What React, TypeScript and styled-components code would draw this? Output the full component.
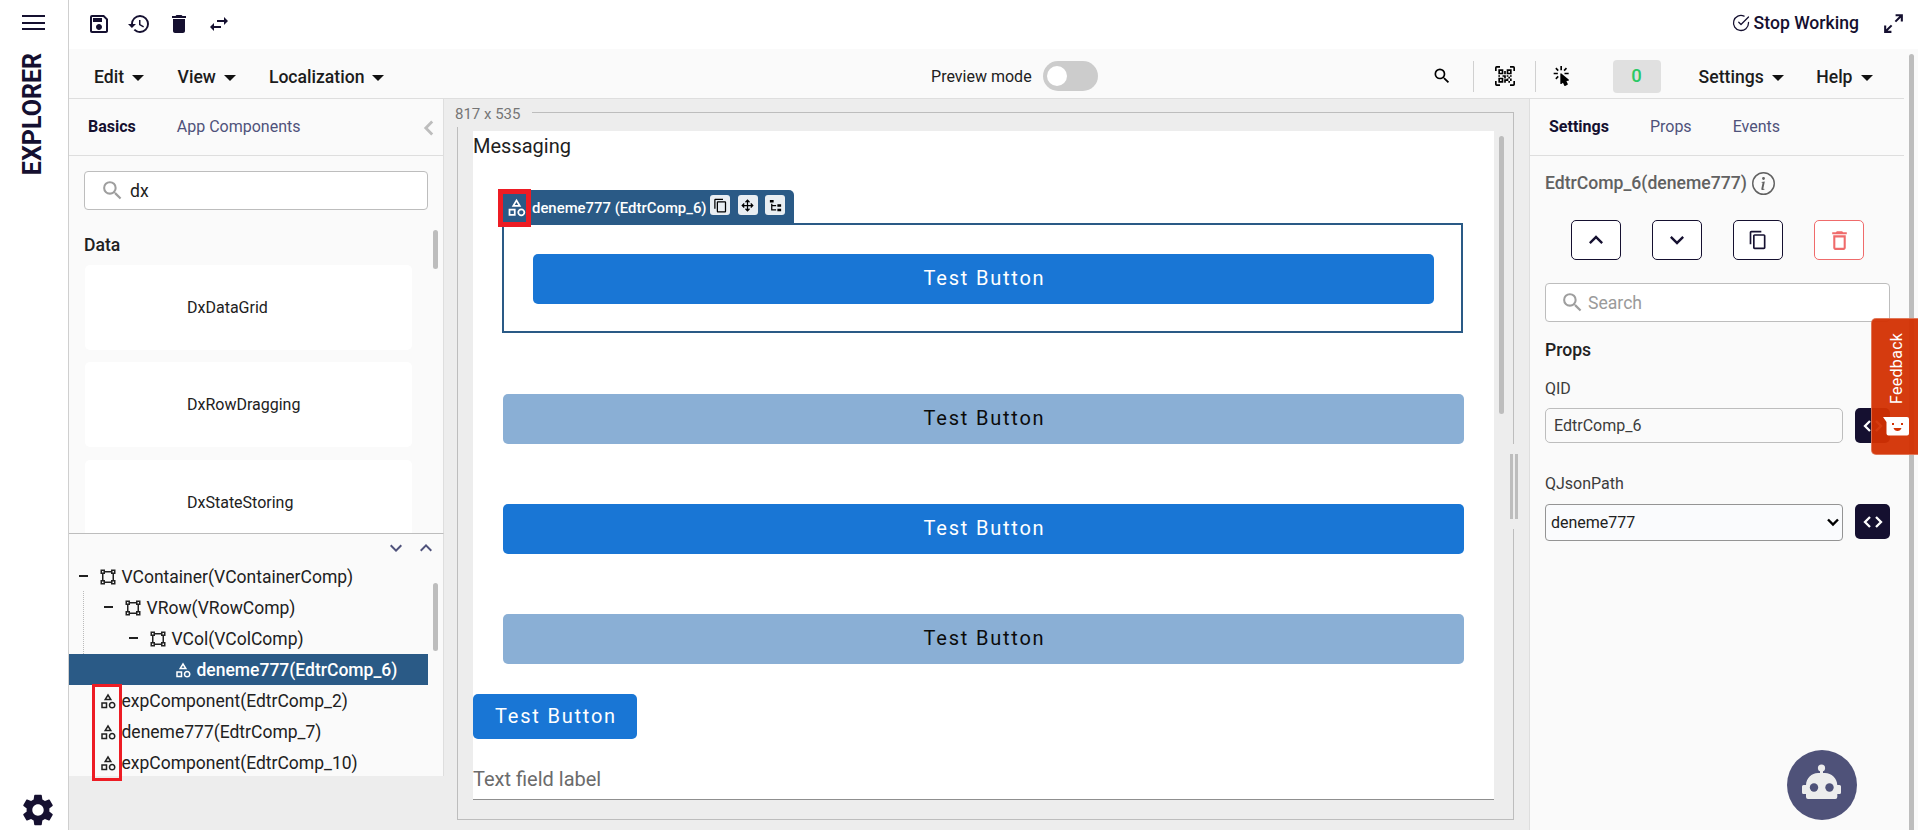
import React from 'react';
import styled, { createGlobalStyle, css } from 'styled-components';
import {
  MdContentCopy,
  MdDelete,
  MdDeleteOutline,
  MdHistory,
  MdOutlineCategory,
  MdOutlineSave,
  MdSearch,
  MdSettings,
  MdSwapHoriz,
} from 'react-icons/md';
import { BsInfoCircle } from 'react-icons/bs';
import { FiCheckCircle } from 'react-icons/fi';

const c = {
  ink: '#151030',
  text: '#212121',
  muted: '#4f527b',
  line: '#dedede',
  grey: '#bdbdbd',
  panel: '#fafafa',
  canvas: '#ededed',
  navy: '#2a5a86',
  blue: '#1976d5',
  paleBlue: '#8aafd5',
  mark: '#ed1c24',
};

const GlobalStyle = createGlobalStyle`
  * { box-sizing: border-box; }
  body {
    margin: 0;
    overflow: hidden;
    font-family: Roboto, "Liberation Sans", sans-serif;
    font-size: 16px;
    color: ${c.text};
    background: #fff;
  }
  svg { display: block; flex: none; }
`;

/* ---------- icons ---------- */

const paths = {
  vectorSquare:
    'M2,2H8V4H16V2H22V8H20V16H22V22H16V20H8V22H2V16H4V8H2V2M16,8V6H8V8H6V16H8V18H16V16H18V8H16M4,4V6H6V4H4M18,4V6H20V4H18M4,18V20H6V18H4M18,18V20H20V18H18Z',
  fileTree:
    'M3,3H9V7H3V3M15,10H21V14H15V10M15,17H21V21H15V17M13,13H7V18H13V20H7L5,20V9H7V11H13V13Z',
  arrowAll:
    'M13,11H18L16.5,9.5L17.92,8.08L21.84,12L17.92,15.92L16.5,14.5L18,13H13V18L14.5,16.5L15.92,17.92L12,21.84L8.08,17.92L9.5,16.5L11,18V13H6L7.5,14.5L6.08,15.92L2.16,12L6.08,8.08L7.5,9.5L6,11H11V6L9.5,7.5L8.08,6.08L12,2.16L15.92,6.08L14.5,7.5L13,6V11Z',
  expand:
    'M10,21V19H6.41L10.91,14.5L9.5,13.09L5,17.59V14H3V21H10M14.5,10.91L19,6.41V10H21V3H14V5H17.59L13.09,9.5L14.5,10.91Z',
  qr:
    'M4,4H10V10H4V4M20,4V10H14V4H20M14,15H16V13H14V11H16V13H18V11H20V13H18V15H20V18H18V20H16V18H13V20H11V16H14V15M16,15V18H18V15H16M4,20V14H10V20H4M6,6V8H8V6H6M16,6V8H18V6H16M6,16V18H8V16H6M4,11H6V13H4V11M9,11H13V15H11V13H9V11M11,6H13V10H11V6M2,2V6H0V2A2,2 0 0,1 2,0H6V2H2M22,0A2,2 0 0,1 24,2V6H22V2H18V0H22M2,18V22H6V24H2A2,2 0 0,1 0,22V18H2M22,22V18H24V22A2,2 0 0,1 22,24H18V22H22Z',
  click:
    'M10.76,8.69A0.76,0.76 0 0,0 10,9.45V20.9C10,21.32 10.34,21.66 10.76,21.66C10.95,21.66 11.11,21.6 11.24,21.5L13.15,19.95L14.81,23.57C14.94,23.84 15.21,24 15.5,24C15.61,24 15.72,24 15.83,23.92L18.59,22.64C18.97,22.46 19.15,22 18.95,21.63L17.28,18L19.69,17.55C19.85,17.5 20,17.43 20.12,17.29C20.39,16.97 20.35,16.5 20,16.21L11.26,8.86L11.25,8.87C11.12,8.76 10.95,8.69 10.76,8.69M15,10V8H20V10H15M13.83,4.76L16.66,1.93L18.07,3.34L15.24,6.17L13.83,4.76M10,0H12V5H10V0M3.93,14.66L6.76,11.83L8.17,13.24L5.34,16.07L3.93,14.66M3.93,3.34L5.34,1.93L8.17,4.76L6.76,6.17L3.93,3.34M7,10H2V8H7V10',
  up: 'M7.41,15.41L12,10.83L16.59,15.41L18,14L12,8L6,14L7.41,15.41Z',
  down: 'M7.41,8.58L12,13.17L16.59,8.58L18,10L12,16L6,10L7.41,8.58Z',
};

function Glyph({ name, size }: { name: keyof typeof paths; size: number }) {
  return (
    <svg width={size} height={size} viewBox="0 0 24 24" fill="currentColor" fillRule="evenodd">
      <path d={paths[name]} />
    </svg>
  );
}

function CodeIcon() {
  return (
    <svg width="22" height="14" viewBox="0 0 22 14" fill="none" stroke="#fff" strokeWidth="2.3">
      <path d="M8 2 3 7l5 5M14 2l5 5-5 5" />
    </svg>
  );
}

/* ---------- shell ---------- */

const Shell = styled.div`
  position: relative;
  display: flex;
  width: 1918px;
  height: 830px;
  overflow: hidden;
  white-space: nowrap;
`;

const Rail = styled.aside`
  flex: none;
  display: flex;
  flex-direction: column;
  width: 69px;
  padding: 15px 0 1px;
  border-right: 1px solid #cfcfcf;
  color: ${c.ink};
`;

const Burger = styled.div`
  width: 23px;
  height: 15px;
  margin-left: 22px;
  border: solid ${c.ink};
  border-width: 2px 0;
  display: flex;
  align-items: center;
  &::before {
    content: '';
    width: 100%;
    height: 2px;
    background: ${c.ink};
  }
`;

const RailTitle = styled.div`
  writing-mode: vertical-rl;
  transform: rotate(180deg);
  width: 30px;
  margin: 23px 0 0 18px;
  line-height: 30px;
  font-size: 25px;
  font-weight: 700;
`;

const RailFoot = styled.div`
  margin: auto 0 0 19px;
`;

const Body = styled.div`
  flex: 1;
  display: flex;
  flex-direction: column;
  min-width: 0;
`;

const TopBar = styled.header`
  flex: none;
  display: flex;
  align-items: center;
  height: 49px;
  padding: 0 12px 2px 18px;
  color: ${c.ink};
`;

const TopIcons = styled.div`
  display: flex;
  gap: 16px;
`;

const StopWorking = styled.div`
  display: flex;
  align-items: center;
  gap: 4px;
  margin: 0 22px 1px auto;
  font-size: 17.6px;
  font-weight: 500;
`;

const Work = styled.div`
  flex: 1;
  display: flex;
  min-height: 0;
  background: ${c.panel};
`;

const Editor = styled.div`
  flex: none;
  display: flex;
  flex-direction: column;
  width: 1835px;
`;

const Gutter = styled.div`
  padding: 5px 0 0 5px;
`;

const Thumb = styled.div<{ $h: number; $top?: number }>`
  width: 5px;
  height: ${(p) => p.$h}px;
  margin-top: ${(p) => p.$top ?? 0}px;
  border-radius: 3px;
  background: ${c.grey};
`;

/* ---------- menu bar ---------- */

const MenuBar = styled.nav`
  flex: none;
  display: flex;
  align-items: center;
  height: 50px;
  padding: 6px 31.5px 0 25px;
  border-bottom: 1px solid ${c.line};
`;

const MenuItem = styled.div<{ $before?: number }>`
  display: flex;
  align-items: center;
  gap: 8px;
  margin-left: ${(p) => p.$before ?? 0}px;
  font-size: 17.6px;
  font-weight: 500;
  color: #1c1c1c;
  &::after {
    content: '';
    margin-top: 2px;
    border: solid transparent;
    border-width: 6px 6px 0;
    border-top-color: #111;
  }
`;

const Preview = styled.div`
  display: flex;
  align-items: center;
  gap: 11px;
  margin-left: auto;
`;

const Switch = styled.div`
  width: 55px;
  height: 30px;
  padding: 5px 4px;
  margin-bottom: 2px;
  border-radius: 15px;
  background: #ccc;
  &::before {
    content: '';
    display: block;
    width: 20px;
    height: 20px;
    border-radius: 50%;
    background: #fff;
  }
`;

const Tools = styled.div`
  display: flex;
  align-items: center;
  margin-left: 334px;
  color: #000;
`;

const ToolCell = styled.div<{ $w: number; $pad: number; $ruled?: boolean }>`
  display: flex;
  align-items: center;
  width: ${(p) => p.$w}px;
  height: 31px;
  margin-bottom: 1px;
  padding-left: ${(p) => p.$pad}px;
  ${(p) => p.$ruled && css`border-right: 1px solid #d0d0d0;`}
`;

const Count = styled.div`
  width: 48px;
  height: 33px;
  line-height: 33px;
  border-radius: 4px;
  background: #e0e0e0;
  color: #2bc966;
  font-size: 18.5px;
  font-weight: 500;
  text-align: center;
`;

/* ---------- left panel ---------- */

const Columns = styled.div`
  flex: 1;
  display: flex;
  min-height: 0;
`;

const LeftColumn = styled.div`
  flex: none;
  width: 375px;
  background: ${c.canvas};
`;

const Library = styled.section`
  display: flex;
  flex-direction: column;
  height: 435px;
  background: ${c.panel};
  border-right: 1px solid ${c.line};
  border-bottom: 1px solid ${c.grey};
  overflow: hidden;
`;

const Tabs = styled.div<{ $gap: number }>`
  flex: none;
  display: flex;
  align-items: center;
  gap: ${(p) => p.$gap}px;
  height: 57px;
  padding: 0 9px 1px 19px;
  border-bottom: 1px solid ${c.line};
`;

const Tab = styled.span<{ $active?: boolean }>`
  color: ${(p) => (p.$active ? c.ink : c.muted)};
  font-weight: ${(p) => (p.$active ? 700 : 400)};
`;

const Collapse = styled.span`
  margin: 2px 0 0 auto;
`;

const SearchBox = styled.div<{ $placeholder?: boolean }>`
  flex: none;
  display: flex;
  align-items: center;
  gap: ${(p) => (p.$placeholder ? 3 : 5)}px;
  height: 39px;
  padding-left: ${(p) => (p.$placeholder ? 14 : 15)}px;
  border: 1px solid ${c.grey};
  border-radius: 4px;
  background: #fff;
  font-size: 17.6px;
  color: ${(p) => (p.$placeholder ? '#9a9a9a' : c.text)};
  svg { color: #9e9e9e; margin-top: -1px; }
`;

const LibrarySearch = styled.div`
  flex: none;
  padding: 15px 15px 0;
`;

const LibraryBody = styled.div`
  flex: 1;
  display: flex;
  justify-content: space-between;
  min-height: 0;
  padding: 20px 5px 0 15px;
`;

const CardList = styled.div`
  display: flex;
  flex-direction: column;
  gap: 12.5px;
  width: 328px;
  padding-left: 1px;
`;

const GroupTitle = styled.h3`
  margin: 0 0 -3px -1px;
  line-height: 25px;
  height: 25px;
  padding-top: 3px;
  font-size: 17.6px;
  font-weight: 500;
`;

const Card = styled.div`
  flex: none;
  height: 85px;
  padding: 0 0 0 102px;
  line-height: 85px;
  border-radius: 5px;
  background: #fff;
`;

const TreePanel = styled.section`
  position: relative;
  height: 242px;
  background: ${c.panel};
  border-right: 1px solid ${c.line};
`;

const TreeHead = styled.div`
  display: flex;
  justify-content: flex-end;
  gap: 6px;
  height: 27px;
  padding: 2px 5px 0 0;
  color: ${c.muted};
`;

const TreeBody = styled.div`
  display: flex;
  justify-content: space-between;
  height: 215px;
  padding-right: 5px;
  overflow: hidden;
`;

const TreeList = styled.div`
  width: 359px;
`;

const TreeRow = styled.div<{ $level: number; $active?: boolean }>`
  display: flex;
  align-items: center;
  height: 31px;
  padding-left: ${(p) => 10 + p.$level * 25}px;
  font-size: 17.5px;
  ${(p) =>
    p.$active &&
    css`
      background: ${c.navy};
      color: #fff;
      font-weight: 500;
    `}
`;

const Toggle = styled.span<{ $shown?: boolean }>`
  width: 9px;
  height: 2px;
  margin: 0 11px 2px 0;
  background: ${(p) => (p.$shown ? c.text : 'transparent')};
`;

const TreeLabel = styled.span`
  margin-left: 4.5px;
`;

const Guide = styled.div`
  position: absolute;
  left: 14px;
  top: 57px;
  height: 63px;
  border-left: 1px dotted #bbb;
`;

const TreeMark = styled.div`
  position: absolute;
  left: 23px;
  top: 150px;
  width: 30px;
  height: 97px;
  border: 3px solid ${c.mark};
`;

/* ---------- canvas ---------- */

const Canvas = styled.main`
  position: relative;
  flex: none;
  width: 1085px;
  padding: 13px 15px 10px 13px;
  background: ${c.canvas};
`;

const Frame = styled.div`
  display: flex;
  height: 708px;
  padding: 18px 9px 0 15px;
  border: 1px solid ${c.grey};
`;

const SizeLabel = styled.div`
  position: absolute;
  left: 5px;
  top: 5px;
  width: 83px;
  height: 23px;
  padding-left: 6px;
  line-height: 20px;
  font-size: 15px;
  color: #757575;
  background: ${c.canvas};
`;

const Resizer = styled.div`
  position: absolute;
  left: 1066px;
  top: 345px;
  display: flex;
  gap: 2px;
  height: 85px;
  padding: 10px 0;
  background: ${c.canvas};
  &::before,
  &::after {
    content: '';
    width: 3px;
    background: ${c.grey};
  }
`;

const Page = styled.div`
  flex: none;
  display: flex;
  flex-direction: column;
  width: 1021px;
  height: 669px;
  margin-right: 5px;
  border-bottom: 1px solid #8f8f8f;
  background: #fff;
  font-size: 20px;
`;

const Heading = styled.div`
  height: 92px;
  line-height: 31px;
`;

const Selected = styled.div`
  position: relative;
  width: 961px;
  height: 110px;
  margin: 0 0 31px 29px;
  padding: 29px 27px 0 29px;
  border: 2px solid ${c.navy};
`;

const TestButton = styled.div<{ $kind: 'solid' | 'pale' | 'small' }>`
  flex: none;
  height: 50px;
  padding-left: 2px;
  line-height: 49px;
  border-radius: 5px;
  text-align: center;
  letter-spacing: 0.0892857em;
  color: ${(p) => (p.$kind === 'pale' ? '#0b0b0b' : '#fff')};
  background: ${(p) => (p.$kind === 'pale' ? c.paleBlue : c.blue)};
  ${(p) =>
    p.$kind === 'small' &&
    css`
      width: 164px;
      height: 45px;
      line-height: 45px;
      margin-top: 30px;
    `}
`;

const Stack = styled.div`
  display: flex;
  flex-direction: column;
  gap: 60px;
  margin: 30px 30px 0;
`;

const FieldLabel = styled.div`
  margin-top: 25px;
  line-height: 30px;
  color: #6b6b6b;
`;

const Toolbar = styled.div`
  position: absolute;
  left: -2px;
  top: -35px;
  display: flex;
  align-items: center;
  width: 292px;
  height: 35px;
  padding: 0 0 0 4px;
  border-radius: 0 5px 0 0;
  background: ${c.navy};
  color: #fff;
  font-size: 14.9px;
  font-weight: 500;
`;

const ToolbarLabel = styled.span`
  width: 177px;
  margin-left: 5px;
  padding-top: 1px;
`;

const ChipRow = styled.div`
  display: flex;
  gap: 7.5px;
  margin: 0 0 5px 1px;
`;

const Chip = styled.div`
  display: flex;
  align-items: center;
  justify-content: center;
  width: 20px;
  height: 20px;
  border-radius: 3px;
  background: #e9eef2;
  color: #000;
`;

const ToolbarMark = styled.div`
  position: absolute;
  left: -6px;
  top: -36px;
  width: 33px;
  height: 38px;
  border: 5px solid ${c.mark};
`;

/* ---------- right panel ---------- */

const Inspector = styled.section`
  flex: 1;
  border-left: 1px solid ${c.line};
`;

const InspectorBody = styled.div`
  display: flex;
  flex-direction: column;
  padding: 15px 14px 0 15px;
`;

const Title = styled.div`
  display: flex;
  align-items: center;
  gap: 5px;
  height: 24px;
  margin-bottom: -1px;
  font-size: 17.6px;
  font-weight: 500;
  color: #616161;
`;

const Actions = styled.div`
  display: flex;
  gap: 31px;
  margin: 26px 0 23px 26px;
`;

const Action = styled.div<{ $danger?: boolean }>`
  display: flex;
  align-items: center;
  justify-content: center;
  width: 50px;
  height: 40px;
  border: 1px solid ${(p) => (p.$danger ? '#ef6b6b' : c.ink)};
  border-radius: 5px;
  background: #fff;
  color: ${(p) => (p.$danger ? '#ef6b6b' : c.ink)};
`;

const SectionTitle = styled.h3`
  margin: 16px 0 15px;
  height: 24px;
  line-height: 24px;
  font-size: 17.6px;
  font-weight: 500;
`;

const Label = styled.div<{ $top?: number; $bottom: number }>`
  margin: ${(p) => p.$top ?? 0}px 0 ${(p) => p.$bottom}px;
  height: 24px;
  line-height: 24px;
  color: #3c3c3c;
`;

const Row = styled.div`
  display: flex;
  gap: 12px;
  align-items: flex-start;
`;

const Input = styled.div<{ $select?: boolean }>`
  display: flex;
  align-items: center;
  justify-content: space-between;
  width: 298px;
  height: 35px;
  padding: 0 0 1px 8px;
  border: 1px solid ${c.grey};
  border-radius: 5px;
  color: #3c3c3c;
  ${(p) =>
    p.$select &&
    css`
      height: 37px;
      padding: 0 3px 0 5px;
      border-color: #949494;
      border-radius: 4px;
      background: #fafbfd;
      color: ${c.text};
    `}
`;

const CodeButton = styled.div`
  display: flex;
  align-items: center;
  justify-content: center;
  width: 35px;
  height: 35px;
  border-radius: 5px;
  background: ${c.ink};
`;

const Feedback = styled.div`
  position: absolute;
  right: 0;
  top: 318px;
  display: flex;
  flex-direction: column;
  width: 47px;
  height: 137px;
  padding: 13px 0 0 11px;
  border: 1px solid rgba(255, 255, 255, 0.3);
  border-right: 0;
  border-radius: 5px 0 0 5px;
  background: rgba(211, 48, 2, 0.95);
  color: #fff;
`;

const FeedbackText = styled.span`
  writing-mode: vertical-rl;
  transform: rotate(180deg);
  width: 26px;
  height: 72px;
  margin: 0 0 13px 1px;
  line-height: 26px;
  letter-spacing: 0.3px;
`;

const BotButton = styled.div`
  position: absolute;
  left: 1787px;
  top: 750px;
  width: 70px;
  height: 70px;
  padding: 13px 0 0 14px;
  border-radius: 50%;
  background: #4f5279;
`;

/* ---------- app ---------- */

type Node = { label: string; level: number; open?: boolean; leaf?: boolean; active?: boolean };

const nodes: Node[] = [
  { label: 'VContainer(VContainerComp)', level: 0, open: true },
  { label: 'VRow(VRowComp)', level: 1, open: true },
  { label: 'VCol(VColComp)', level: 2, open: true },
  { label: 'deneme777(EdtrComp_6)', level: 3, leaf: true, active: true },
  { label: 'expComponent(EdtrComp_2)', level: 0, leaf: true },
  { label: 'deneme777(EdtrComp_7)', level: 0, leaf: true },
  { label: 'expComponent(EdtrComp_10)', level: 0, leaf: true },
];

export default function App() {
  return (
    <Shell>
      <GlobalStyle />
      <Rail>
        <Burger />
        <RailTitle>EXPLORER</RailTitle>
        <RailFoot>
          <MdSettings size={38} />
        </RailFoot>
      </Rail>

      <Body>
        <TopBar>
          <TopIcons>
            <MdOutlineSave size={24} />
            <MdHistory size={24} />
            <MdDelete size={24} />
            <MdSwapHoriz size={24} />
          </TopIcons>
          <StopWorking>
            <FiCheckCircle size={18} strokeWidth={1.7} />
            Stop Working
          </StopWorking>
          <Glyph name="expand" size={25} />
        </TopBar>

        <Work>
          <Editor>
            <MenuBar>
              <MenuItem>Edit</MenuItem>
              <MenuItem $before={33.5}>View</MenuItem>
              <MenuItem $before={33}>Localization</MenuItem>
              <Preview>
                Preview mode
                <Switch />
              </Preview>
              <Tools>
                <ToolCell $w={42} $pad={0} $ruled>
                  <MdSearch size={20} />
                </ToolCell>
                <ToolCell $w={62} $pad={21} $ruled>
                  <Glyph name="qr" size={20} />
                </ToolCell>
                <ToolCell $w={77} $pad={16}>
                  <Glyph name="click" size={20} />
                </ToolCell>
                <Count>0</Count>
              </Tools>
              <MenuItem $before={38}>Settings</MenuItem>
              <MenuItem $before={32.5}>Help</MenuItem>
            </MenuBar>

            <Columns>
              <LeftColumn>
                <Library>
                  <Tabs $gap={41}>
                    <Tab $active>Basics</Tab>
                    <Tab>App Components</Tab>
                    <Collapse>
                      <svg width="11" height="16" viewBox="0 0 11 16" fill="none" stroke="#bdbdbd" strokeWidth="2.8">
                        <path d="M9.2 1.5 2.8 8l6.4 6.5" />
                      </svg>
                    </Collapse>
                  </Tabs>
                  <LibrarySearch>
                    <SearchBox>
                      <MdSearch size={25} />
                      dx
                    </SearchBox>
                  </LibrarySearch>
                  <LibraryBody>
                    <CardList>
                      <GroupTitle>Data</GroupTitle>
                      <Card>DxDataGrid</Card>
                      <Card>DxRowDragging</Card>
                      <Card>DxStateStoring</Card>
                    </CardList>
                    <Thumb $h={39} />
                  </LibraryBody>
                </Library>
                <TreePanel>
                  <TreeHead>
                    <Glyph name="down" size={24} />
                    <Glyph name="up" size={24} />
                  </TreeHead>
                  <TreeBody>
                    <TreeList>
                      {nodes.map((n) => (
                        <TreeRow key={n.label} $level={n.level} $active={n.active}>
                          <Toggle $shown={n.open} />
                          {n.leaf ? <MdOutlineCategory size={18} /> : <Glyph name="vectorSquare" size={18} />}
                          <TreeLabel>{n.label}</TreeLabel>
                        </TreeRow>
                      ))}
                    </TreeList>
                    <Thumb $h={68} $top={22} />
                  </TreeBody>
                  <Guide />
                  <TreeMark />
                </TreePanel>
              </LeftColumn>

              <Canvas>
                <Frame>
                  <Page>
                    <Heading>Messaging</Heading>
                    <Selected>
                      <TestButton $kind="solid">Test Button</TestButton>
                      <Toolbar>
                        <MdOutlineCategory size={21} />
                        <ToolbarLabel>deneme777 (EdtrComp_6)</ToolbarLabel>
                        <ChipRow>
                          <Chip>
                            <MdContentCopy size={15} />
                          </Chip>
                          <Chip>
                            <Glyph name="arrowAll" size={15} />
                          </Chip>
                          <Chip>
                            <Glyph name="fileTree" size={15} />
                          </Chip>
                        </ChipRow>
                      </Toolbar>
                      <ToolbarMark />
                    </Selected>
                    <Stack>
                      <TestButton $kind="pale">Test Button</TestButton>
                      <TestButton $kind="solid">Test Button</TestButton>
                      <TestButton $kind="pale">Test Button</TestButton>
                    </Stack>
                    <TestButton $kind="small">Test Button</TestButton>
                    <FieldLabel>Text field label</FieldLabel>
                  </Page>
                  <Thumb $h={278} $top={5} />
                </Frame>
                <SizeLabel>817 x 535</SizeLabel>
                <Resizer />
              </Canvas>

              <Inspector>
                <Tabs $gap={41}>
                  <Tab $active>Settings</Tab>
                  <Tab>Props</Tab>
                  <Tab>Events</Tab>
                </Tabs>
                <InspectorBody>
                  <Title>
                    EdtrComp_6(deneme777)
                    <BsInfoCircle size={23} />
                  </Title>
                  <Actions>
                    <Action>
                      <Glyph name="up" size={28} />
                    </Action>
                    <Action>
                      <Glyph name="down" size={28} />
                    </Action>
                    <Action>
                      <MdContentCopy size={20} />
                    </Action>
                    <Action $danger>
                      <MdDeleteOutline size={25} />
                    </Action>
                  </Actions>
                </InspectorBody>
                <PropsForm />
              </Inspector>
            </Columns>
          </Editor>
          <Gutter>
            <Thumb $h={790} />
          </Gutter>
        </Work>
      </Body>

      <Feedback>
        <FeedbackText>Feedback</FeedbackText>
        <svg width="26" height="19" viewBox="0 0 26 19">
          <path d="M0 0h24a2 2 0 0 1 2 2v14.500a2 2 0 0 1-2 2H5.500a2 2 0 0 1-2-2V5Z" fill="#fff" />
          <path d="M9 6h2v2H9zM18 6h2v2h-2zM10.500 11h8c-.6 2-2 3-4 3s-3.400-1-4-3Z" fill="#d43204" />
        </svg>
      </Feedback>

      <BotButton>
        <svg width="41" height="38" viewBox="0 0 41 38">
          <circle cx="20.500" cy="5" r="3.600" fill="#ededed" />
          <path
            d="M19 7h3v3h2c6.500 0 12 5 12.300 12H38.500a1.500 1.500 0 0 1 1.500 1.500v6a1.500 1.500 0 0 1-1.500 1.500H36.300v3a2 2 0 0 1-2 2H7a2 2 0 0 1-2-2v-3H2.500A1.500 1.500 0 0 1 1 29.500v-6A1.500 1.500 0 0 1 2.500 22H5C5.300 15 10.500 10 17 10h2Z"
            fill="#ededed"
          />
          <circle cx="13" cy="24.500" r="4.200" fill="#4f5279" />
          <circle cx="28.500" cy="24.500" r="4.200" fill="#4f5279" />
        </svg>
      </BotButton>
    </Shell>
  );
}

const Form = styled.div`
  width: 360px;
  padding-left: 15px;
`;

function PropsForm() {
  return (
    <Form>
      <SearchBox $placeholder>
        <MdSearch size={25} />
        Search
      </SearchBox>
      <SectionTitle>Props</SectionTitle>
      <Label $bottom={7}>QID</Label>
      <Row>
        <Input>EdtrComp_6</Input>
        <CodeButton>
          <CodeIcon />
        </CodeButton>
      </Row>
      <Label $top={29} $bottom={8}>QJsonPath</Label>
      <Row>
        <Input $select>
          deneme777
          <svg width="12" height="9" viewBox="0 0 12 9" fill="none" stroke="#000" strokeWidth="2.400">
            <path d="m1 1.500 5 5 5-5" />
          </svg>
        </Input>
        <CodeButton>
          <CodeIcon />
        </CodeButton>
      </Row>
    </Form>
  );
}
